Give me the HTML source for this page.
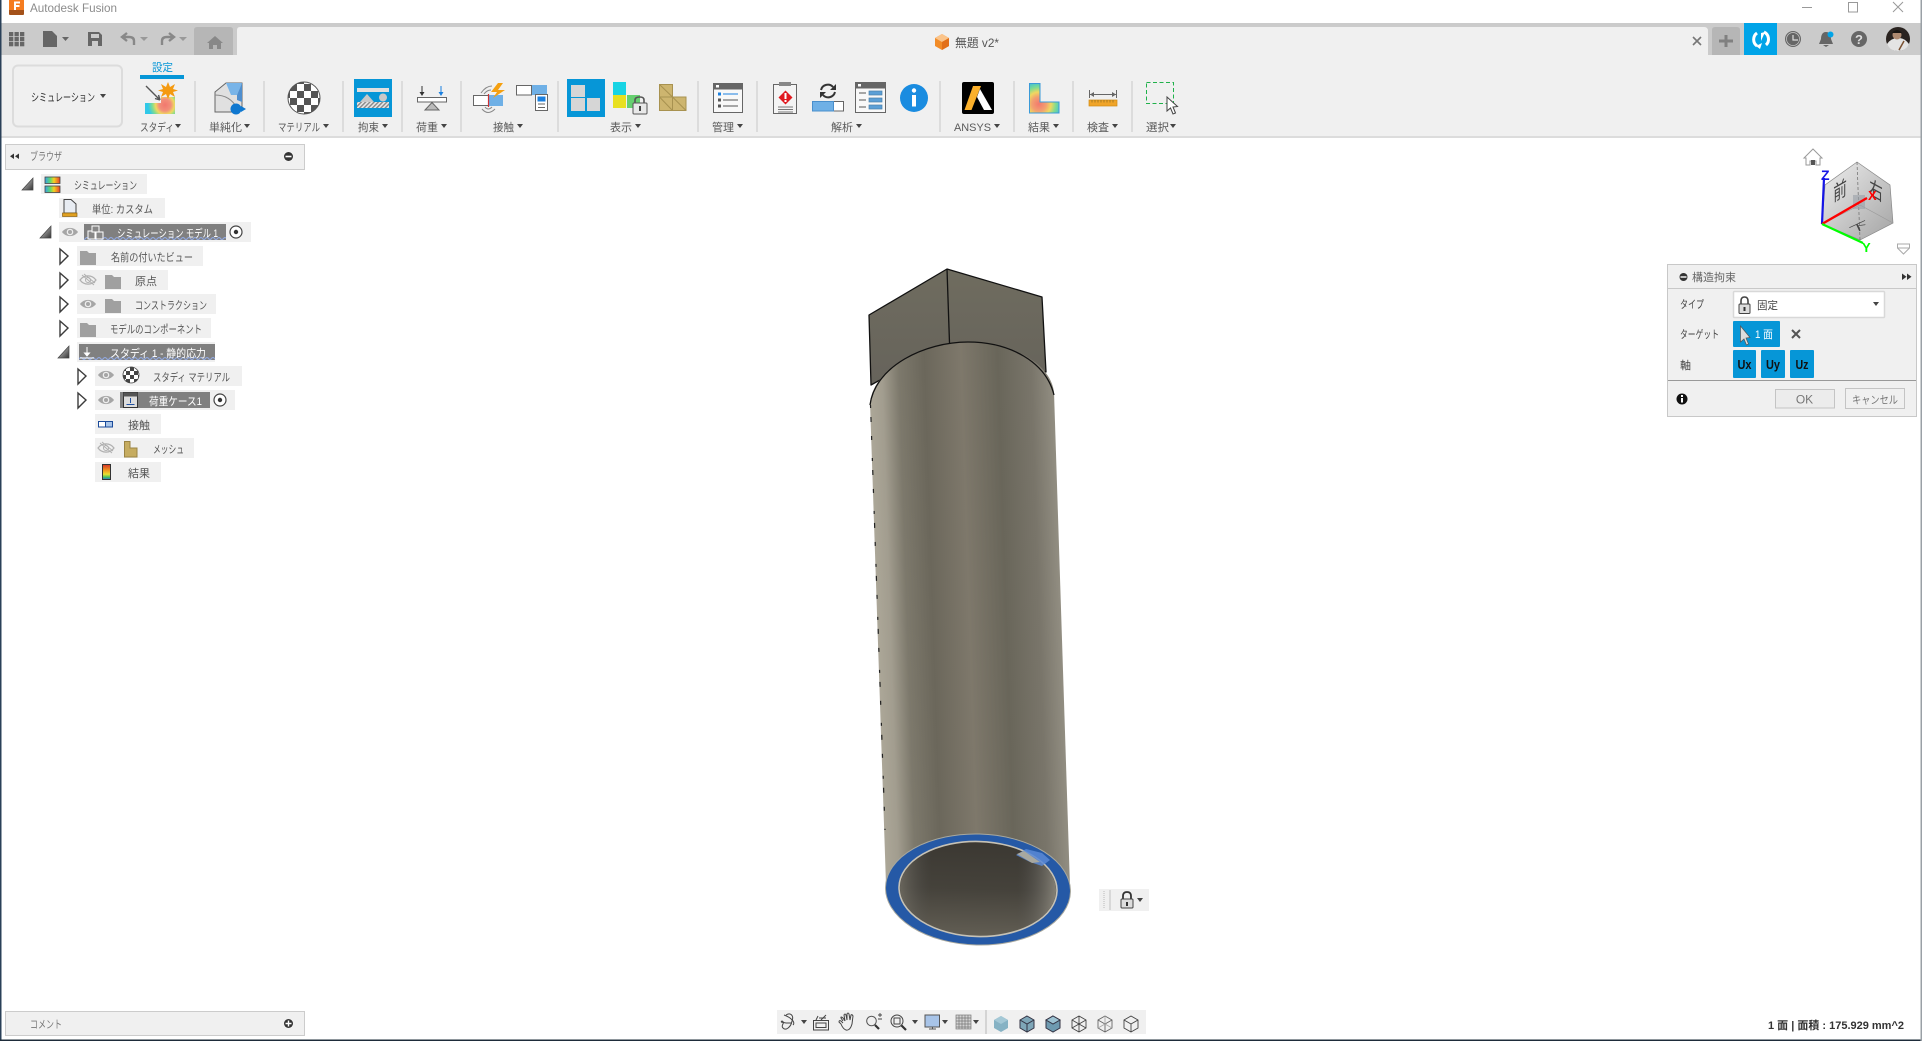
<!DOCTYPE html>
<html><head><meta charset="utf-8"><title>Autodesk Fusion</title>
<style>html,body{margin:0;padding:0;background:#fff;overflow:hidden}svg{display:block}text{font-family:"Liberation Sans","Noto Sans CJK JP",sans-serif;font-size:11px;fill:#555}.w{fill:#fff}.a{fill:#555}.l{font-size:11px;fill:#5a5a5a}</style></head><body>
<svg width="1922" height="1041" viewBox="0 0 1922 1041" xmlns="http://www.w3.org/2000/svg">
<defs>
<linearGradient id="cyl" gradientUnits="userSpaceOnUse" x1="878" y1="640" x2="1062" y2="634"><stop offset="0" stop-color="#aca798"/><stop offset=".07" stop-color="#a29d8f"/><stop offset=".16" stop-color="#7d796c"/><stop offset=".3" stop-color="#6b675b"/><stop offset=".5" stop-color="#7e786b"/><stop offset=".7" stop-color="#69665a"/><stop offset=".88" stop-color="#79756a"/><stop offset="1" stop-color="#928e82"/></linearGradient>
<linearGradient id="inn" x1="0" y1="0" x2="0" y2="1"><stop offset="0" stop-color="#3b3832"/><stop offset=".5" stop-color="#45423b"/><stop offset="1" stop-color="#625e54"/></linearGradient>
<linearGradient id="inn2" x1="0" y1="0" x2="1" y2="0"><stop offset="0" stop-color="#8d897d" stop-opacity=".5"/><stop offset=".2" stop-color="#555" stop-opacity="0"/><stop offset=".75" stop-color="#555" stop-opacity="0"/><stop offset="1" stop-color="#a09c90" stop-opacity=".7"/></linearGradient>
<linearGradient id="pri" x1="0" y1="0" x2="0" y2="1"><stop offset="0" stop-color="#6f6c5f"/><stop offset="1" stop-color="#66635b"/></linearGradient>
<linearGradient id="tri" x1="0" y1="0" x2="1" y2="1"><stop offset="0" stop-color="#ddd"/><stop offset="1" stop-color="#333"/></linearGradient>
<linearGradient id="cube" x1="0" y1="0" x2="1" y2="1"><stop offset="0" stop-color="#eee"/><stop offset="1" stop-color="#a4a4a4"/></linearGradient>
<linearGradient id="rb" x1="0" y1="0" x2="1" y2="0"><stop offset="0" stop-color="#3aa0e8"/><stop offset=".35" stop-color="#5fd86f"/><stop offset=".6" stop-color="#f5d020"/><stop offset="1" stop-color="#e8402a"/></linearGradient>
<linearGradient id="rv" x1="0" y1="0" x2="0" y2="1"><stop offset="0" stop-color="#d6322a"/><stop offset=".4" stop-color="#f09a20"/><stop offset=".65" stop-color="#e8e030"/><stop offset=".85" stop-color="#40c060"/><stop offset="1" stop-color="#3070e0"/></linearGradient>
<radialGradient id="heat" gradientUnits="userSpaceOnUse" cx="165" cy="105" r="17"><stop offset="0" stop-color="#f2786e"/><stop offset=".35" stop-color="#f2907a"/><stop offset=".55" stop-color="#f0d860"/><stop offset=".75" stop-color="#80dc90"/><stop offset="1" stop-color="#30c8e8"/></radialGradient>
<radialGradient id="heat2" gradientUnits="userSpaceOnUse" cx="1039" cy="104" r="24"><stop offset="0" stop-color="#f2786e"/><stop offset=".3" stop-color="#f2a070"/><stop offset=".5" stop-color="#f0d860"/><stop offset=".7" stop-color="#80dc90"/><stop offset="1" stop-color="#30b8e8"/></radialGradient>
<pattern id="chk" width="14" height="14" patternUnits="userSpaceOnUse" x="290" y="84"><rect width="14" height="14" fill="#fff"/><rect width="7" height="7" fill="#555"/><rect x="7" y="7" width="7" height="7" fill="#555"/></pattern>
<pattern id="chk2" width="8" height="8" patternUnits="userSpaceOnUse" x="122" y="367"><rect width="8" height="8" fill="#fff"/><rect width="4" height="4" fill="#444"/><rect x="4" y="4" width="4" height="4" fill="#444"/></pattern>
<pattern id="hat" width="3" height="3" patternUnits="userSpaceOnUse" patternTransform="rotate(45)"><rect width="3" height="3" fill="#e8e8e8"/><rect width="1.4" height="3" fill="#888"/></pattern>
<pattern id="wav" width="6" height="3" patternUnits="userSpaceOnUse"><path d="M0 3L3 0L6 3" fill="none" stroke="#8fa5d8" stroke-width="1.2"/></pattern>
<g id="eye"><path d="M-8 0C-4-5.500 4-5.500 8 0C4 5.500-4 5.500-8 0Z" fill="#a6a6a6"/><circle r="3.300" fill="#eee"/><circle r="2" fill="#a6a6a6"/></g>
<g id="eyeoff"><path d="M-8 0C-4-5.500 4-5.500 8 0C4 5.500-4 5.500-8 0Z" fill="none" stroke="#b0b0b0" stroke-width="1.200"/><circle r="2.500" fill="none" stroke="#b0b0b0"/><path d="M-6-5L6 5M-4-6L7 3" stroke="#b0b0b0"/></g>
<path id="fold" d="M0 2H7L9 4H16V16H0Z" fill="#a0a0a0"/>
<path id="tc" d="M0 0L8 7L0 15Z" fill="#fff" stroke="#3c3c3c" stroke-width="1.400"/>
<path id="to" d="M11 0V12H0Z" fill="url(#tri)" stroke="#444" stroke-width=".7"/>
<g id="rad"><circle r="6" fill="#fff" stroke="#444" stroke-width="1.200"/><circle r="2.200" fill="#333"/></g>
<path id="arr" d="M0 0H6L3 4Z" fill="#444"/>
</defs>

<!-- chrome -->
<rect width="1922" height="1041" fill="#fff"/>
<rect y="23" width="1922" height="32" fill="#cbcbcb"/>
<path d="M237 55V30Q237 27 240 27H1704Q1708 27 1708 31V55Z" fill="#f0f0f0"/>
<rect y="55" width="1922" height="81" fill="#f0f0f0"/>
<rect y="136" width="1922" height="2" fill="#dcdcdc"/>
<path d="M194 55V30Q194 27 197 27H230Q233 27 233 30V55Z" fill="#b6b6b6"/>
<path d="M1712 55V30Q1712 27 1715 27H1737Q1740 27 1740 30V55Z" fill="#b6b6b6"/>
<rect x="1744" y="23" width="33" height="32" fill="#00a4e8"/>

<!-- title -->
<rect x="9" y="0" width="15" height="10" fill="#f57c20"/><path d="M9 10H24V14Q24 15 23 15H10Q9 15 9 14Z" fill="#a4521a"/>
<path d="M14 1.500H20V3.500H16V5H19.500V7H16V10H14Z" fill="#fff"/>
<text x="30" y="12" textLength="87" lengthAdjust="spacingAndGlyphs" style="font-size:12px;fill:#8c8c8c">Autodesk Fusion</text>
<path d="M1802 7.500H1812" stroke="#999" stroke-width="1"/><rect x="1848.500" y="2.500" width="9" height="9.500" fill="none" stroke="#999"/><path d="M1893 2L1903 12M1903 2L1893 12" stroke="#999"/>

<!-- tab bar icons -->
<g fill="#666"><rect x="9" y="32" width="4.300" height="4.300"/><rect x="14.500" y="32" width="4.300" height="4.300"/><rect x="20" y="32" width="4.300" height="4.300"/><rect x="9" y="37" width="4.300" height="4.300"/><rect x="14.500" y="37" width="4.300" height="4.300"/><rect x="20" y="37" width="4.300" height="4.300"/><rect x="9" y="42" width="4.300" height="4.300"/><rect x="14.500" y="42" width="4.300" height="4.300"/><rect x="20" y="42" width="4.300" height="4.300"/>
<path d="M43 31H52L57 36V47H43Z"/><path d="M62 37H69L65.500 41Z"/>
<path fill-rule="evenodd" d="M88 32H99L102 35V46H88ZM91 34V38H99V34ZM92 41V46H98V41Z"/><path d="M140 37H148L144 41Z" fill="#999"/><path d="M179 37H187L183 41Z" fill="#999"/></g>
<g transform="translate(0,-9)"><path d="M134 54V50Q134 46 129 46H123M127 42L122 46L127 50" fill="none" stroke="#888" stroke-width="2.400"/>
<path d="M162 54V50Q162 46 167 46H173M169 42L174 46L169 50" fill="none" stroke="#888" stroke-width="2.400"/></g>
<path d="M215 36L223 43H221V49H217V45H213V49H209V43H207Z" fill="#888"/>
<path d="M942 34L949 38V46L942 50L935 46V38Z" fill="#f28c28"/><path d="M942 34L949 38L942 42L935 38Z" fill="#fbc48a"/><path d="M942 42L949 38V46L942 50Z" fill="#e2701a"/>
<text x="955" y="47" textLength="44" lengthAdjust="spacingAndGlyphs" style="font-size:12px;fill:#555">無題 v2*</text>
<path d="M1693 37L1701 45M1701 37L1693 45" stroke="#777" stroke-width="1.600"/>
<path d="M1726 35V47M1719 41H1733" stroke="#808080" stroke-width="3"/>
<g fill="none" stroke="#fff" stroke-width="3"><path d="M1757 33A8 8 0 0 0 1757 46"/><path d="M1764 32A8 8 0 0 1 1766 45"/></g><path d="M1761 33L1765 32L1761 41ZM1762 43L1760 49L1756 46Z" fill="#fff"/>
<circle cx="1793" cy="39" r="8" fill="#666"/><circle cx="1793" cy="39" r="6.500" fill="none" stroke="#ccc" stroke-width=".7"/><path d="M1793 35V40H1798" fill="none" stroke="#ddd" stroke-width="1.200"/>
<path d="M1826 32C1822 32 1821 36 1821 39L1819 44H1833L1831 39C1831 36 1830 32 1826 32ZM1823 45H1829L1826 47Z" fill="#666"/><circle cx="1830.500" cy="34.500" r="3" fill="#00a4e8"/>
<circle cx="1859" cy="39" r="8" fill="#666"/><text x="1859" y="44" text-anchor="middle" style="font-size:13px;font-weight:bold;fill:#ddd">?</text>
<circle cx="1898" cy="39" r="12" fill="#2a2320"/><path d="M1887 44Q1891 38 1898 38Q1905 38 1909 44Q1906 51 1898 51Q1890 51 1887 44Z" fill="#e4e4e4"/><circle cx="1897" cy="35" r="4.500" fill="#b08a70"/><path d="M1892 33Q1897 27 1902 33Z" fill="#1a1512"/><path d="M1904 41L1899 50" stroke="#7a5030" stroke-width="1.500"/>

<!-- mode button -->
<rect x="13" y="65.500" width="109" height="61" rx="5" fill="#f0f0f0" stroke="#dcdcdc" stroke-width="2"/>
<text x="31" y="101" textLength="64" lengthAdjust="spacingAndGlyphs" style="fill:#333">シミュレーション</text><use href="#arr" x="100" y="94"/>
<text x="152" y="71" textLength="21" lengthAdjust="spacingAndGlyphs" style="fill:#0696d7">設定</text>
<rect x="140" y="75" width="44" height="4" fill="#0696d7"/>
<!-- separators -->
<g fill="#dcdcdc"><rect x="194" y="81" width="2" height="51"/><rect x="263" y="81" width="2" height="51"/><rect x="342" y="81" width="2" height="51"/><rect x="401" y="81" width="2" height="51"/><rect x="460" y="81" width="2" height="51"/><rect x="557" y="81" width="2" height="51"/><rect x="697" y="81" width="2" height="51"/><rect x="756" y="81" width="2" height="51"/><rect x="939" y="81" width="2" height="51"/><rect x="1013" y="81" width="2" height="51"/><rect x="1072" y="81" width="2" height="51"/><rect x="1131" y="81" width="2" height="51"/></g>
<!-- ribbon labels -->
<g>
<text class="l" x="140" y="131" textLength="34" lengthAdjust="spacingAndGlyphs">スタディ</text><use href="#arr" x="175" y="124"/>
<text class="l" x="209" y="131" textLength="33" lengthAdjust="spacingAndGlyphs">単純化</text><use href="#arr" x="244" y="124"/>
<text class="l" x="278" y="131" textLength="42" lengthAdjust="spacingAndGlyphs">マテリアル</text><use href="#arr" x="323" y="124"/>
<text class="l" x="358" y="131" textLength="21" lengthAdjust="spacingAndGlyphs">拘束</text><use href="#arr" x="382" y="124"/>
<text class="l" x="416" y="131" textLength="22" lengthAdjust="spacingAndGlyphs">荷重</text><use href="#arr" x="441" y="124"/>
<text class="l" x="493" y="131" textLength="21" lengthAdjust="spacingAndGlyphs">接触</text><use href="#arr" x="517" y="124"/>
<text class="l" x="610" y="131" textLength="22" lengthAdjust="spacingAndGlyphs">表示</text><use href="#arr" x="635" y="124"/>
<text class="l" x="712" y="131" textLength="22" lengthAdjust="spacingAndGlyphs">管理</text><use href="#arr" x="737" y="124"/>
<text class="l" x="831" y="131" textLength="22" lengthAdjust="spacingAndGlyphs">解析</text><use href="#arr" x="856" y="124"/>
<text class="l" x="954" y="131" textLength="37" lengthAdjust="spacingAndGlyphs">ANSYS</text><use href="#arr" x="994" y="124"/>
<text class="l" x="1028" y="131" textLength="22" lengthAdjust="spacingAndGlyphs">結果</text><use href="#arr" x="1053" y="124"/>
<text class="l" x="1087" y="131" textLength="22" lengthAdjust="spacingAndGlyphs">検査</text><use href="#arr" x="1112" y="124"/>
<text class="l" x="1146" y="131" textLength="23" lengthAdjust="spacingAndGlyphs">選択</text><use href="#arr" x="1170" y="124"/>
</g>
<!-- study -->
<path d="M145 103H161V97H175V114H145Z" fill="url(#heat)"/><path d="M146 86L160 100M160 100L155 98.500M160 100L158.500 95" stroke="#555" stroke-width="1.400" fill="none"/>
<path d="M168 82L170 87L175 84L173 89L178 90.500L173 92L175 97L170 94L168 99L166 94L161 97L163 92L158 90.500L163 89L161 84L166 87Z" fill="#f59a10"/>
<!-- simplify -->
<path d="M215 92L226 83H242V108L237 112H215Z" fill="#e0e0e0" stroke="#666"/><path d="M226 83H242L237 95H231Z" fill="#78b4e8"/><path d="M242 83V102L237 100V95Z" fill="#4f8fcf"/><path d="M215 95Q230 95 237 108" fill="none" stroke="#888"/>
<circle cx="236" cy="109" r="5.500" fill="#0f78d0"/><path d="M241 106L246 109L241 112Z" fill="#0f78d0"/>
<!-- material -->
<ellipse cx="304" cy="98" rx="16" ry="16" fill="url(#chk)" stroke="#555"/>
<!-- constraint -->
<rect x="354" y="79" width="38" height="38" fill="#0696d7"/><rect x="357" y="88" width="32" height="4" fill="#e0e0e0"/><path d="M360 102L367 94L374 102Z" fill="#c8c8c8"/><ellipse cx="383" cy="97.500" rx="4" ry="4" fill="#c8c8c8"/><rect x="357" y="102" width="32" height="6" fill="url(#hat)"/>
<!-- load -->
<path d="M422 86V93" stroke="#333"/><path d="M419.500 92H424.500L422 96Z" fill="#333"/><path d="M441 86V93" stroke="#1a80e0"/><path d="M438.500 92H443.500L441 96Z" fill="#1a80e0"/><rect x="417.500" y="97.500" width="29" height="4.500" fill="#fff" stroke="#666"/><path d="M425 110L432 102.500L439 110Z" fill="#bbb" stroke="#666"/>
<!-- contact -->
<rect x="473.500" y="95.500" width="15" height="10" fill="#fff" stroke="#666"/><rect x="489" y="95" width="14" height="11" fill="#6fb0e6"/><path d="M488.500 94V107" stroke="#d03030" stroke-width="1.200"/><path d="M498 83L503 83L498 90L505 90L493 98L497 92L491 92Z" fill="#f5a010"/>
<path d="M481 93Q486 86 492 86M484 94Q487 90 491 90M482 109Q488 116 495 109M485 107Q488 111 492 107" fill="none" stroke="#888"/>
<rect x="516.500" y="85.500" width="15" height="9.500" fill="#fff" stroke="#666"/><rect x="532" y="85" width="15" height="10" fill="#6fb0e6"/><rect x="535.500" y="94.500" width="12" height="16" fill="#fff" stroke="#666"/><rect x="537.500" y="96.500" width="8" height="5" fill="#1a80e0"/><path d="M538 104H545M538 107.500H545" stroke="#666"/>
<!-- display -->
<rect x="567" y="79" width="38" height="38" fill="#0696d7"/><g fill="#d6d6d6"><rect x="571" y="85" width="14" height="12"/><rect x="571" y="98" width="14" height="13"/><rect x="587" y="98" width="13" height="13"/></g>
<rect x="613" y="82" width="13" height="13" fill="#18d4e4"/><rect x="613" y="95" width="13" height="13" fill="#e8e020"/><rect x="627" y="95" width="13" height="13" fill="#66d070"/>
<path d="M635 103V100Q635 97 640 97Q644 97 644 100V103" fill="none" stroke="#555" stroke-width="1.600"/><rect x="633" y="103" width="14" height="11" rx="1" fill="#e8e8e8" stroke="#555"/><rect x="639" y="106" width="2" height="5" fill="#444"/>
<path d="M659.500 84.500H672.500V97H686V110.500H659.500Z" fill="#cdb56f" stroke="#a89250"/><path d="M659.500 97H686M672.500 97V110.500M659.500 84.500L672.500 97L686 110.500M659.500 97L672.500 110.500" stroke="#a89250" fill="none"/>
<!-- manage -->
<rect x="713.500" y="83.500" width="29" height="29" fill="#f8f8f8" stroke="#666"/><rect x="713.500" y="83.500" width="29" height="6" fill="#666"/><rect x="716" y="85" width="3" height="2.500" fill="#fff"/><rect x="718" y="92.500" width="3" height="3" fill="#1a80e0"/><path d="M723 94H738" stroke="#1a80e0"/><rect x="718" y="98.500" width="3" height="3" fill="#555"/><path d="M723 100H738" stroke="#555"/><rect x="718" y="104.500" width="3" height="3" fill="#555"/><path d="M723 106H738" stroke="#555"/>
<!-- analysis -->
<rect x="773.500" y="84.500" width="23" height="29" fill="#f4f4f4" stroke="#666"/><rect x="779" y="82" width="12" height="4" fill="#888"/><path d="M785.500 90.500L792.500 97.500L785.500 104.500L778.500 97.500Z" fill="#e01a20"/><rect x="784.500" y="93" width="2" height="6" fill="#fff"/><rect x="784.500" y="100" width="2" height="2" fill="#fff"/><path d="M778 107H793M778 109.500H793M778 112H793" stroke="#777"/>
<path d="M821 90A7 7 0 0 1 833 87M835 92A7 7 0 0 1 823 95" fill="none" stroke="#333" stroke-width="2"/><path d="M836 84V90H830ZM820 98V92H826Z" fill="#333"/>
<rect x="812.500" y="101.500" width="31" height="9.500" fill="#fff" stroke="#666"/><rect x="812.500" y="101.500" width="21" height="9.500" fill="#6fb0e6" stroke="#4a8fcc"/>
<rect x="855.500" y="82.500" width="30" height="30" fill="#f8f8f8" stroke="#666"/><rect x="855.500" y="82.500" width="30" height="6" fill="#666"/><rect x="858" y="84" width="3" height="2.500" fill="#fff"/><path d="M859 93H866M859 100H866M859 107H866" stroke="#555"/><g fill="#5b9fd6" stroke="#4a7faa" stroke-width=".7"><rect x="869" y="91" width="13" height="4"/><rect x="869" y="98" width="13" height="4"/><rect x="869" y="105" width="13" height="4"/></g>
<circle cx="914" cy="98" r="14" fill="#1a8ce0"/><circle cx="914" cy="90.500" r="2.200" fill="#fff"/><rect x="912" y="95" width="4" height="11.500" fill="#fff"/>
<!-- ansys -->
<rect x="962" y="82" width="32" height="32" rx="2" fill="#000"/><path d="M973 86H981L971.500 110H964.500Z" fill="#fbb02b"/><path d="M980 89L992 110H984L977 97Z" fill="#fff"/>
<!-- results -->
<path d="M1029.500 83.500H1040V102H1059V113H1029.500Z" fill="url(#heat2)" stroke="#3a9ad8"/>
<!-- inspect -->
<path d="M1089.500 90V98M1116.500 90V98M1090 94.500H1116" stroke="#666" fill="none"/><path d="M1090 94.500L1094 92V97ZM1116 94.500L1112 92V97Z" fill="#666"/><rect x="1089" y="100" width="28" height="6" fill="#f0a428" stroke="#d08a10" stroke-width=".7"/><path d="M1092 100V102.500M1095 100V102.500M1098 100V102.500M1101 100V102.500M1104 100V102.500M1107 100V102.500M1110 100V102.500M1113 100V102.500" stroke="#8a6a20" stroke-width=".7"/>
<!-- select -->
<rect x="1146.500" y="82.500" width="27" height="21" fill="none" stroke="#1fb14a" stroke-dasharray="4 2.500"/>
<path d="M1167 97V111L1170.500 108L1173 114L1175.500 113L1173 107L1177.500 106.500Z" fill="#fff" stroke="#444"/>

<!-- browser panel -->
<rect x="5.500" y="144.500" width="299" height="25" fill="#f0f0f0" stroke="#ccc"/>
<path d="M14 153.500V159L10 156.200ZM19 153.500V159L15 156.200Z" fill="#333"/>
<text x="30" y="160" textLength="32" lengthAdjust="spacingAndGlyphs" style="fill:#777">ブラウザ</text>
<circle cx="288.500" cy="156.500" r="4.500" fill="#333"/><rect x="285.500" y="155.700" width="6" height="1.600" fill="#fff"/>

<!-- tree rows -->
<g fill="#f0f0f0"><rect x="41" y="174" width="106" height="20"/><rect x="59" y="198" width="106" height="20"/><rect x="59" y="222" width="192" height="20"/><rect x="77" y="246" width="126" height="20"/><rect x="77" y="270" width="91" height="20"/><rect x="77" y="294" width="139" height="20"/><rect x="77" y="318" width="134" height="20"/><rect x="77" y="342" width="138" height="20"/><rect x="95" y="366" width="147" height="20"/><rect x="95" y="390" width="140" height="20"/><rect x="95" y="414" width="66" height="20"/><rect x="95" y="438" width="99" height="20"/><rect x="95" y="462" width="66" height="20"/></g>
<rect x="84" y="224" width="142" height="16" fill="#808080"/><rect x="84" y="237" width="142" height="3" fill="url(#wav)"/>
<rect x="79" y="344" width="136" height="16" fill="#808080"/><rect x="79" y="357" width="136" height="3" fill="url(#wav)"/>
<rect x="120" y="392" width="90" height="16" fill="#808080"/>
<use href="#to" x="22" y="178"/><use href="#to" x="40" y="226"/><use href="#to" x="58" y="346"/>
<use href="#tc" x="60" y="249"/><use href="#tc" x="60" y="273"/><use href="#tc" x="60" y="297"/><use href="#tc" x="60" y="321"/><use href="#tc" x="78" y="369"/><use href="#tc" x="78" y="393"/>
<use href="#eye" x="70" y="232"/><use href="#eyeoff" x="88" y="280"/><use href="#eye" x="88" y="304"/><use href="#eye" x="106" y="375"/><use href="#eye" x="106" y="400"/><use href="#eyeoff" x="106" y="448"/>
<use href="#fold" x="80" y="249"/><use href="#fold" x="105" y="273"/><use href="#fold" x="105" y="297"/><use href="#fold" x="80" y="321"/>
<rect x="45" y="177" width="15" height="6.500" fill="url(#rb)" stroke="#444" stroke-width=".8"/><rect x="45" y="186" width="15" height="6.500" fill="url(#rb)" stroke="#444" stroke-width=".8"/>
<path d="M64 199.500H71L76 204V213H64Z" fill="#e8ecf2" stroke="#444"/><rect x="62.500" y="213" width="14.500" height="3.500" fill="#e0a020" stroke="#8a6010" stroke-width=".7"/>
<g stroke="#fff" fill="#888"><rect x="88" y="231" width="7" height="8"/><rect x="92" y="226" width="7" height="6"/><rect x="96" y="232" width="7" height="7"/></g>
<path d="M87 347V354M84.500 353H89.500L87 356ZM80 358H94" stroke="#fff" fill="#fff"/>
<ellipse cx="131" cy="375" rx="8" ry="8" fill="url(#chk2)" stroke="#444" stroke-width=".8"/>
<rect x="123.500" y="392.500" width="14" height="15" fill="#ddd" stroke="#333"/><rect x="123.500" y="392.500" width="14" height="4" fill="#555"/><path d="M130.500 398V403M126.500 404.500H134.500" stroke="#2050a0"/>
<rect x="98.500" y="421.500" width="7" height="5.500" fill="#fff" stroke="#1a4a9a"/><rect x="105.500" y="421.500" width="7" height="5.500" fill="#a8c4e8" stroke="#1a4a9a"/>
<path d="M124.500 441.500H130V448H137V457H124.500Z" fill="#c6ac60" stroke="#9a8444"/>
<rect x="102.500" y="464.500" width="8" height="15" fill="url(#rv)" stroke="#333"/>
<use href="#rad" x="236" y="232"/><use href="#rad" x="220" y="400"/>
<text x="74" y="189" textLength="63" lengthAdjust="spacingAndGlyphs">シミュレーション</text>
<text x="92" y="213" textLength="61" lengthAdjust="spacingAndGlyphs">単位: カスタム</text>
<text class="w" style="fill:#fff" x="117" y="237" textLength="101" lengthAdjust="spacingAndGlyphs">シミュレーション モデル 1</text>
<text x="111" y="261" textLength="82" lengthAdjust="spacingAndGlyphs">名前の付いたビュー</text>
<text x="135" y="285" textLength="22" lengthAdjust="spacingAndGlyphs">原点</text>
<text x="135" y="309" textLength="72" lengthAdjust="spacingAndGlyphs">コンストラクション</text>
<text x="110" y="333" textLength="92" lengthAdjust="spacingAndGlyphs">モデルのコンポーネント</text>
<text style="fill:#fff" x="110" y="357" textLength="96" lengthAdjust="spacingAndGlyphs">スタディ 1 - 静的応力</text>
<text x="153" y="381" textLength="77" lengthAdjust="spacingAndGlyphs">スタディ マテリアル</text>
<text style="fill:#fff" x="149" y="405" textLength="53" lengthAdjust="spacingAndGlyphs">荷重ケース1</text>
<text x="128" y="429" textLength="22" lengthAdjust="spacingAndGlyphs">接触</text>
<text x="153" y="453" textLength="31" lengthAdjust="spacingAndGlyphs">メッシュ</text>
<text x="128" y="477" textLength="22" lengthAdjust="spacingAndGlyphs">結果</text>

<!-- model -->
<path d="M869 315L947 269L1042 297L1046 372L1000 360L930 352L871 385Z" fill="url(#pri)" stroke="#111" stroke-width="1.300" stroke-linejoin="round"/>
<path d="M947 269L949.500 343" stroke="#111" stroke-width="1.300"/>
<path d="M870 402C875 366 925 342 968 342C1010 342 1050 362 1054 392L1070 887L886 885Z" fill="url(#cyl)"/>
<path d="M870 405C875 366 925 342 968 342C1010 342 1046 362 1054 395" fill="none" stroke="#111" stroke-width="1.300"/>
<path d="M870.500 405L885 830" fill="none" stroke="#222" stroke-width="1.200" stroke-dasharray="3 9 5 14 4 18"/>
<g transform="rotate(1.500 978 889.500)"><ellipse cx="978" cy="889.500" rx="92.500" ry="55.500" fill="#2559a6" stroke="#a8a89e" stroke-width="1"/>
<ellipse cx="978" cy="889" rx="79" ry="47.500" fill="url(#inn)" stroke="#c6c2b6" stroke-width="1.600"/><ellipse cx="978" cy="889" rx="78" ry="46.500" fill="url(#inn2)"/></g>
<path d="M1026 849L1042 853L1050 860L1042 866L1030 862L1016 855Z" fill="#5a8ad6" opacity=".85"/><path d="M1017 854L1024 851L1040 862L1032 863Z" fill="#a8a8a0"/>

<!-- lock bar -->
<rect x="1099" y="889" width="50" height="22" fill="#f0f0f0"/><rect x="1109" y="890" width="2" height="20" fill="#d8d8d8"/><path d="M1104 891V909" stroke="#ccc" stroke-dasharray="1 1" stroke-width="1.500"/>
<path d="M1123 899V896Q1123 892 1127 892Q1131 892 1131 896V899" fill="none" stroke="#333" stroke-width="1.800"/><rect x="1121" y="899" width="12" height="9" rx="1" fill="#ddd" stroke="#444"/><rect x="1126" y="902" width="2" height="4" fill="#333"/>
<use href="#arr" x="1137" y="898"/>

<!-- viewcube -->
<path d="M1813 149L1822 158H1820V165H1816V161H1810V165H1806V158H1804Z" fill="#fff" stroke="#999"/><rect x="1811" y="160" width="4" height="5" fill="#555"/>
<path d="M1857 162L1890 185L1893 223L1860 240L1822 224L1825 185Z" fill="url(#cube)" stroke="#888" stroke-width=".7"/>
<path d="M1857 162L1860 240" stroke="#777" stroke-dasharray="3 2" stroke-width=".8"/><path d="M1860 205L1893 223M1860 205L1822 224" stroke="#999" stroke-width=".6"/>
<rect x="1853" y="195" width="12" height="14" fill="#9aa0a8" opacity=".6"/>
<text transform="translate(1840,198) skewY(-30) scale(.85,1.300)" text-anchor="middle" style="font-size:16px;fill:#444">前</text>
<text transform="translate(1876,198) skewY(28) scale(.85,1.300)" text-anchor="middle" style="font-size:16px;fill:#444">右</text>
<text transform="translate(1860,230) rotate(-25) scale(1.300,.6)" text-anchor="middle" style="font-size:15px;fill:#444">下</text>
<path d="M1822 224L1824 178" stroke="#1515e6" stroke-width="2.200"/>
<path d="M1822 224L1867 198" stroke="#f00" stroke-width="2.400"/>
<path d="M1822 224L1863 243" stroke="#0f0" stroke-width="2.200"/>
<text x="1821" y="180" style="font-size:14px;font-weight:bold;fill:#1515e6">Z</text>
<text x="1868" y="200" style="font-size:13px;font-weight:bold;fill:#f00">X</text>
<text x="1862" y="252" style="font-size:13px;font-weight:bold;fill:#0f0">Y</text>
<path d="M1897.500 244H1909.500V248L1903.500 254L1897.500 248ZM1897.500 248H1909.500" fill="#fff" stroke="#aaa"/>

<!-- constraint panel -->
<rect x="1667.500" y="264.500" width="249" height="152" fill="#f0f0f0" stroke="#c8c8c8"/>
<path d="M1668 288.500H1916" stroke="#c8c8c8"/><path d="M1668 380.500H1916" stroke="#999"/>
<circle cx="1683.500" cy="277" r="4" fill="#333"/><rect x="1680.500" y="276.300" width="6" height="1.400" fill="#fff"/>
<text x="1692" y="281" textLength="44" lengthAdjust="spacingAndGlyphs" style="fill:#666">構造拘束</text>
<path d="M1902 273.500V280L1906.500 276.800ZM1907 273.500V280L1911.500 276.800Z" fill="#333"/>
<text x="1680" y="308" textLength="24" lengthAdjust="spacingAndGlyphs" style="fill:#444">タイプ</text>
<rect x="1733.500" y="291.500" width="151" height="26" rx="1" fill="#fff" stroke="#d8d8d8" stroke-width="1.500"/>
<path d="M1741 304V301Q1741 297 1744.500 297Q1748 297 1748 301V304" fill="none" stroke="#444" stroke-width="1.600"/><rect x="1739" y="304" width="11" height="9.500" rx="1" fill="#ddd" stroke="#444"/><rect x="1743.500" y="307" width="2" height="4" fill="#333"/>
<text x="1757" y="309" textLength="21" lengthAdjust="spacingAndGlyphs" style="fill:#444">固定</text>
<use href="#arr" x="1873" y="302"/>
<text x="1680" y="338" textLength="39" lengthAdjust="spacingAndGlyphs" style="fill:#444">ターゲット</text>
<rect x="1733" y="321" width="47" height="26" rx="1" fill="#0696d7"/>
<path d="M1740.500 326V342L1744 339L1746.500 345L1748.500 344L1746 338L1750 337.500Z" fill="#ddd" stroke="#555" stroke-width=".7"/>
<text x="1755" y="338" textLength="18" lengthAdjust="spacingAndGlyphs" style="fill:#fff">1 面</text>
<path d="M1792 330L1800 338M1800 330L1792 338" stroke="#555" stroke-width="2"/>
<text x="1680" y="369" textLength="11" lengthAdjust="spacingAndGlyphs" style="fill:#444">軸</text>
<g fill="#0696d7"><rect x="1733" y="350" width="23" height="28" rx="1"/><rect x="1761" y="350" width="24" height="28" rx="1"/><rect x="1790" y="350" width="24" height="28" rx="1"/></g>
<g style="font-weight:bold"><text x="1737.500" y="369" textLength="14" lengthAdjust="spacingAndGlyphs" style="font-size:13px;font-weight:bold;fill:#111">Ux</text><text x="1766" y="369" textLength="14" lengthAdjust="spacingAndGlyphs" style="font-size:13px;font-weight:bold;fill:#111">Uy</text><text x="1795.500" y="369" textLength="13" lengthAdjust="spacingAndGlyphs" style="font-size:13px;font-weight:bold;fill:#111">Uz</text></g>
<circle cx="1682" cy="399" r="5.500" fill="#111"/><rect x="1681" y="398" width="2" height="4.500" fill="#fff"/><rect x="1681" y="395" width="2" height="2" fill="#fff"/>
<rect x="1775.500" y="389.500" width="59" height="18.500" fill="#ececec" stroke="#c4c4c4"/><text x="1804.500" y="403.500" text-anchor="middle" style="font-size:12px;fill:#777">OK</text>
<rect x="1845.500" y="388.500" width="59" height="20" fill="#f0f0f0" stroke="#c4c4c4"/><text x="1852" y="403.500" textLength="46" lengthAdjust="spacingAndGlyphs" style="fill:#777">キャンセル</text>

<!-- comment panel -->
<rect x="5.500" y="1011.500" width="299" height="24" fill="#f0f0f0" stroke="#ccc"/>
<text x="30" y="1028" textLength="32" lengthAdjust="spacingAndGlyphs" style="fill:#777">コメント</text>
<circle cx="288.500" cy="1023.500" r="4.500" fill="#333"/><path d="M285.500 1023.500H291.500M288.500 1020.500V1026.500" stroke="#fff" stroke-width="1.400"/>

<!-- bottom nav -->
<rect x="777" y="1010" width="369" height="24" fill="#f0f0f0"/><rect x="985" y="1010" width="2" height="24" fill="#d4d4d4"/>
<g fill="none" stroke="#444" stroke-width="1">
<path d="M786 1015C791 1012 794 1016 792 1021C791 1027 786 1031 783 1028C780 1025 786 1023 782 1021L781 1022M784 1015C790 1017 796 1022 793 1025"/><path d="M781 1022L786 1023M786 1023H792"/>
<rect x="813.500" y="1020.500" width="15" height="9.500"/><rect x="816" y="1023" width="10" height="4.500"/><path d="M816 1020L818 1016M821 1020L826 1015M819 1018H826"/>
<path d="M843 1021L841 1018Q840.500 1016 843 1018L845 1021L844 1015Q845 1013 846 1015L847 1020V1014Q848 1012 849 1014L850 1020L851 1015Q852 1014 853 1016L852 1024Q850 1031 846 1030Q843 1029 841 1024L839 1022Q839 1020 841 1021L843 1023"/>
<circle cx="871.500" cy="1021" r="4.800" stroke="#555"/><path d="M875 1025L879 1029" stroke="#333" stroke-width="2.200"/><path d="M878 1015H882M880 1013V1017M878 1019H882" stroke-width=".9"/>
<circle cx="897" cy="1021" r="6"/><rect x="894" y="1018" width="6" height="6"/><path d="M901.500 1025.500L906 1030" stroke="#333" stroke-width="2.200"/>
</g>
<g fill="#444"><use href="#arr" x="801" y="1020"/><use href="#arr" x="912" y="1020"/><use href="#arr" x="942" y="1020"/><use href="#arr" x="973" y="1020"/></g>
<rect x="925" y="1015" width="14.500" height="12" fill="#a8c4e8" stroke="#555"/><path d="M929 1029H936M932.500 1027V1029" stroke="#555"/>
<g stroke="#777" stroke-width=".7" fill="#d4d4d4"><rect x="956" y="1015" width="15" height="14"/><path d="M959 1015V1029M962 1015V1029M965 1015V1029M968 1015V1029M956 1018H971M956 1021H971M956 1024H971M956 1027H971" fill="none"/></g>
<!-- view cubes -->
<path d="M1001 1016L1008 1020V1028L1001 1032L994 1028V1020Z" fill="#86b2c4"/><path d="M1001 1016L1008 1020L1001 1024L994 1020Z" fill="#a4c8d6"/>
<g stroke="#334"><path d="M1027 1016L1034 1020V1028L1027 1032L1020 1028V1020Z" fill="#7ea6b8"/><path d="M1027 1024V1032M1020 1020L1027 1024L1034 1020" fill="none"/>
<path d="M1053 1016L1060 1020V1028L1053 1032L1046 1028V1020Z" fill="#6e9ab0"/><path d="M1053 1016L1060 1020L1053 1024L1046 1020Z" fill="#9cc2d2"/></g>
<g stroke="#444" stroke-width=".9" fill="none"><path d="M1079 1016L1086 1020V1028L1079 1032L1072 1028V1020ZM1079 1016V1032M1072 1020L1086 1028M1086 1020L1072 1028"/>
<path d="M1105 1016L1112 1020V1028L1105 1032L1098 1028V1020ZM1105 1024V1032M1098 1020L1105 1024L1112 1020" stroke="#666"/><path d="M1105 1016V1024M1098 1028L1105 1024L1112 1028" stroke="#aaa"/>
<path d="M1131 1016L1138 1020V1028L1131 1032L1124 1028V1020ZM1131 1024V1032M1124 1020L1131 1024L1138 1020"/></g>

<text x="1768" y="1029" textLength="136" lengthAdjust="spacingAndGlyphs" style="font-weight:bold;fill:#333">1 面 | 面積 : 175.929 mm^2</text>

<!-- window edges -->
<rect x="0" y="0" width="1.500" height="1041" fill="#2a4058"/>
<rect x="0" y="1039.500" width="1922" height="1.500" fill="#1e2c3a"/>
<rect x="1920.500" y="0" width="1.500" height="1041" fill="#9aa0a6"/>
</svg>
</body></html>
